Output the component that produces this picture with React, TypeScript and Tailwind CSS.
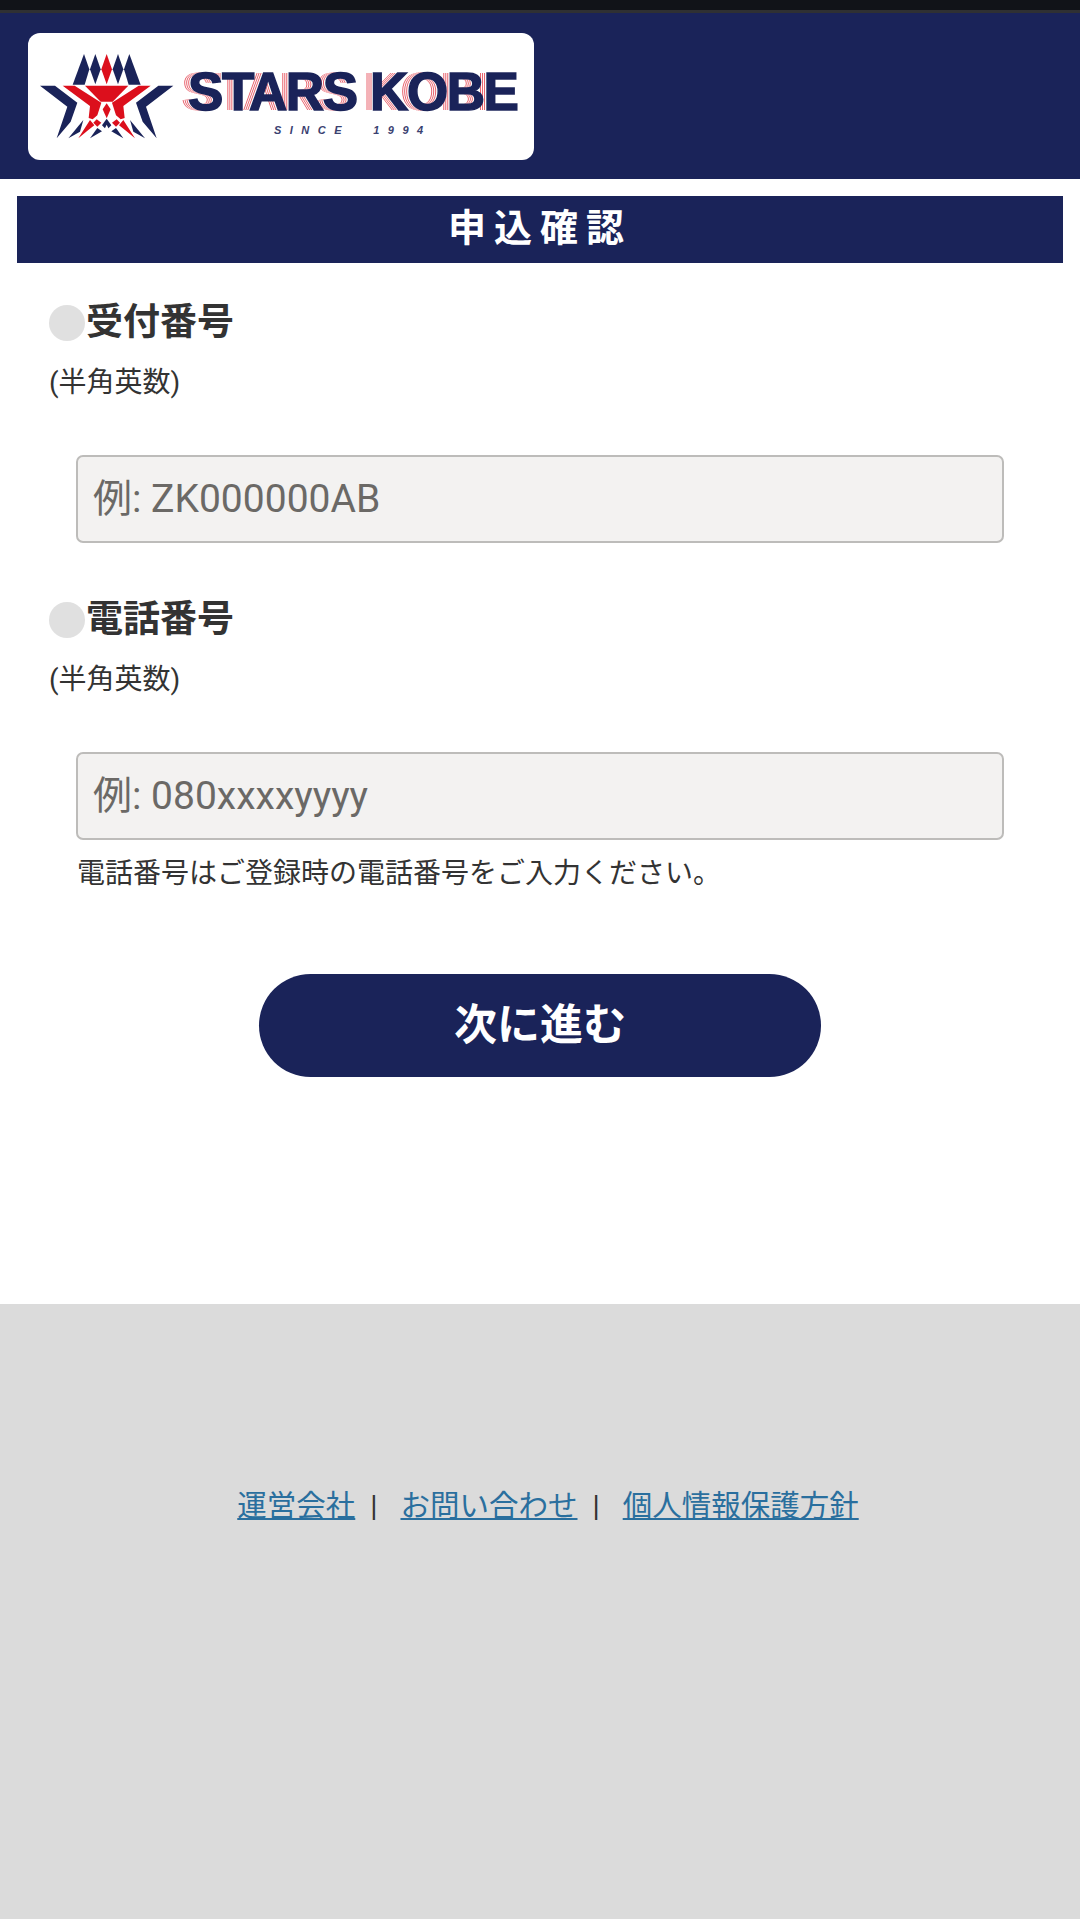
const StarHalf = () => (
  <>
    <g fill="#1a2359">
      <path d="M132 12 L98 104 L134 104 L148 58 Z" />
      <path d="M166 12 L150 58 L166 103 L182 58 Z" />
      <path d="M0 107 L45 107 L112 158 L92 215 L50 265 L82 170 Z" />
      <path d="M85 265 L130 210 L120 245 Z" />
      <path d="M150 265 L172 234 L186 244 Z" />
    </g>
    <g fill="#dc0f1c">
      <path d="M68 107 L104 107 L184 158 L172 196 L158 208 L146 204 L150 168 Z" />
      <path d="M115 265 L150 210 L163 226 L145 240 Z" />
      <path d="M170 208 L160 218 L172 230 L184 218 Z" />
    </g>
  </>
);

const Logo = () => (
  <div className="ml-[28px] flex h-[127px] w-[506px] items-center rounded-[12px] bg-white">
    <svg width="135" height="95" viewBox="0 0 405 285" className="ml-[12px] mt-[2px] shrink-0">
      <StarHalf />
      <g transform="matrix(-1 0 0 1 400 0)">
        <StarHalf />
      </g>
      <path d="M200 12 L184 58 L200 103 L216 58 Z" fill="#dc0f1c" />
      <path d="M135 107 L265 107 L218 155 L182 155 Z" fill="#dc0f1c" />
      <path d="M200 160 L188 178 L200 205 L212 178 Z" fill="#dc0f1c" />
      <path d="M200 206 L186 226 L200 240 L214 226 Z" fill="#1a2359" />
      <path d="M200 224 L206 236 L218 238 L209 246 L212 258 L200 252 L188 258 L191 246 L182 238 L194 236 Z" fill="#fff" />
    </svg>
    <div className="ml-[13px] mt-[11px] flex flex-col items-center">
      <span className="text-[53px] leading-[50px] font-bold tracking-[-1.4px] whitespace-nowrap text-[#1a2359] font-['Liberation_Sans',sans-serif] [-webkit-text-stroke:1.5px_#1a2359] [text-shadow:-2px_0_0_#fff,-3px_0_0_#e8606b,-4px_0_0_#fff,-5px_0_0_#e8606b,-6px_0_0_#fff,-7px_0_0_#e8606b]">
        STARS KOBE
      </span>
      <span className="mt-[6px] text-[11px] leading-[14px] font-bold italic tracking-[8.5px] whitespace-pre text-[#3a4170] font-['Liberation_Sans',sans-serif]">
        SINCE  1994
      </span>
    </div>
  </div>
);

const Field = ({ label, placeholder }: { label: string; placeholder: string }) => (
  <div>
    <div className="flex h-[44px] items-center pl-[49px]">
      <span className="mt-[-1px] h-[36px] w-[36px] shrink-0 rounded-full bg-[#e0e0e0]" />
      <h2 className="ml-[1px] text-[37px] leading-[44px] font-bold text-[#333]">{label}</h2>
    </div>
    <p className="mt-[18px] pl-[49px] text-[28px] leading-[40px] text-[#333]">(半角英数)</p>
    <input
      type="text"
      placeholder={placeholder}
      className="mt-[52px] ml-[76px] block h-[88px] w-[928px] rounded-[7px] border-[2.5px] border-[#bdbcba] bg-[#f3f2f1] px-[15px] text-[39px] text-[#333] placeholder:text-[#6b6966] outline-none"
    />
  </div>
);

export default function App() {
  return (
    <div className="flex min-h-[1919px] flex-col bg-white font-['Roboto','Noto_Sans_CJK_JP',sans-serif]">
      <div className="h-[10px] bg-[#111318]" />
      <div className="h-[3px] bg-[#2f3033]" />
      <header className="h-[166px] bg-[#1a2359] pt-[20px]">
        <Logo />
      </header>

      <main className="h-[1125px]">
        <h1 className="mx-[17px] mt-[17px] h-[67px] bg-[#1a2359] text-center text-[38px] leading-[64px] font-bold tracking-[8px] text-white">
          申込確認
        </h1>

        <div className="mt-[38px]">
          <Field label="受付番号" placeholder="例: ZK000000AB" />
        </div>
        <div className="mt-[55px]">
          <Field label="電話番号" placeholder="例: 080xxxxyyyy" />
        </div>

        <p className="mt-[14px] ml-[77px] text-[28px] leading-[40px] text-[#333]">
          電話番号はご登録時の電話番号をご入力ください。
        </p>

        <div className="mt-[80px] flex justify-center">
          <button className="h-[103px] w-[562px] rounded-full bg-[#1a2359] text-[43px] font-bold text-white">
            次に進む
          </button>
        </div>
      </main>

      <footer className="flex flex-1 items-start justify-center bg-[#dbdbdb] pt-[184px] text-[29.5px] leading-[36px] text-[#333]">
        <div className="ml-[16px] flex whitespace-nowrap">
          <a href="#" className="text-[#2a6f9e] underline">運営会社</a>
          <span className="mx-[15px]">|</span>
          <a href="#" className="ml-[8px] text-[#2a6f9e] underline">お問い合わせ</a>
          <span className="mx-[15px]">|</span>
          <a href="#" className="ml-[8px] text-[#2a6f9e] underline">個人情報保護方針</a>
        </div>
      </footer>
    </div>
  );
}
